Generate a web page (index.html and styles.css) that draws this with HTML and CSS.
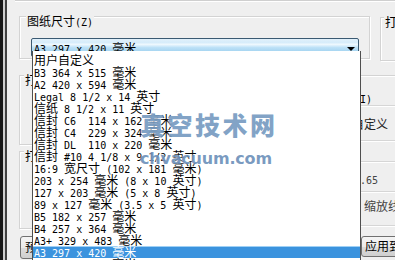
FILE: index.html
```html
<!DOCTYPE html>
<html>
<head>
<meta charset="utf-8">
<link rel="stylesheet" href="styles.css">
</head>
<body>
<div class="dlg">
  <div class="edge"></div>
  <div class="main">
    <div class="topline"></div>
    <div class="row1">
      <div class="grp paper">
        <div class="cap"><span class="c">图纸尺寸</span>(Z)</div>
        <div class="combo">
          <span class="val">A3 297 x 420 <span class="c">毫米</span></span>
          <i class="arrow"></i>
        </div>
      </div>
      <div class="grp copies">
        <div class="cap cap2"><span class="c">打印份数</span>(B)</div>
      </div>
    </div>
    <div class="row2">
      <div class="lcol">
        <div class="grp area"><div class="cap cap3"><span class="c">打印区域</span></div></div>
        <div class="grp offset"><div class="cap cap3"><span class="c">打印偏移</span></div></div>
        <div class="btn"><span class="c">预览</span>(P)...</div>
      </div>
      <div class="rcol">
        <div class="grp scale">
          <div class="line chk"><span class="c">布满图纸</span>(I)</div>
          <div class="sep s1"></div>
          <div class="line sc"><span class="c">自定义</span></div>
          <div class="sep s2"></div>
          <div class="sep s3"></div>
          <div class="line num">1.65</div>
          <div class="sep s4"></div>
          <div class="line lw"><span class="c">缩放线宽</span>(L)</div>
          <div class="sep s5"></div>
          <div class="btn btn2"><span class="c">应用到布局</span>(U)</div>
        </div>
      </div>
    </div>
  </div>

  <div class="list">
    <div class="r"><span class="c">用户自定义</span></div>
    <div class="r">B3 364 x 515 <span class="c">毫米</span></div>
    <div class="r">A2 420 x 594 <span class="c">毫米</span></div>
    <div class="r">Legal 8 1/2 x 14 <span class="c">英寸</span></div>
    <div class="r"><span class="c">信纸</span> 8 1/2 x 11 <span class="c">英寸</span></div>
    <div class="r"><span class="c">信封</span> C6  114 x 162 <span class="c">毫米</span></div>
    <div class="r"><span class="c">信封</span> C4  229 x 324 <span class="c">毫米</span></div>
    <div class="r"><span class="c">信封</span> DL  110 x 220 <span class="c">毫米</span></div>
    <div class="r"><span class="c">信封</span> #10 4 1/8 x 9 1/2 <span class="c">英寸</span></div>
    <div class="r">16:9 <span class="c">宽尺寸</span> (102 x 181 <span class="c">毫米</span>)</div>
    <div class="r">203 x 254 <span class="c">毫米</span> (8 x 10 <span class="c">英寸</span>)</div>
    <div class="r">127 x 203 <span class="c">毫米</span> (5 x 8 <span class="c">英寸</span>)</div>
    <div class="r">89 x 127 <span class="c">毫米</span> (3.5 x 5 <span class="c">英寸</span>)</div>
    <div class="r">B5 182 x 257 <span class="c">毫米</span></div>
    <div class="r">B4 257 x 364 <span class="c">毫米</span></div>
    <div class="r">A3+ 329 x 483 <span class="c">毫米</span></div>
    <div class="r sel">A3 297 x 420 <span class="c">毫米</span></div>
    <div class="r">A5 148 x 210 <span class="c">毫米</span></div>
  </div>

  <div class="wm">
    <div class="wm-cn">真空技术网</div>
    <div class="wm-en">chvacuum.com</div>
  </div>
</div>
</body>
</html>
```

FILE: styles.css
```css
* { box-sizing: border-box; margin: 0; padding: 0; }
html, body { width: 395px; height: 260px; overflow: hidden; }
body {
  background: #efefef;
  color: #000;
  font-family: "DejaVu Sans Mono", "Noto Sans CJK SC", monospace;
  font-size: 10px;
  line-height: 12px;
}
.c { font-family: "Noto Sans CJK SC", sans-serif; font-size: 12px; }

.dlg { position: relative; width: 395px; height: 260px; display: flex; overflow: hidden; }
.edge {
  width: 7px; flex: none;
  background: linear-gradient(to right, #161616 0 3px, #cdcdcd 3px 5px, #404040 5px 7px);
}
.main { flex: 1; display: flex; flex-direction: column; min-width: 0; }
.topline {
  height: 3px; margin-left: 8px;
  border-left: 1px solid #cfcfcf; border-bottom: 1px solid #cfcfcf;
  box-shadow: 0 1px 0 #fff;
}

.grp { border: 1px solid #d3d3d3; box-shadow: inset 1px 1px 0 #fff, 1px 1px 0 #fff; }
.cap {
  display: inline-block; height: 12px; padding: 0 1px;
  margin: -8px 0 0 6px; background: #efefef; white-space: nowrap;
}
.cap2 { margin-left: 3px; }
.cap3 { margin-left: 4px; }

.row1 { display: flex; height: 60px; flex: none; }
.paper { margin: 15px 0 0 12px; width: 351px; height: 43px; flex: none; }
.copies { margin: 16px 0 0 10px; flex: 1; height: 44px; border-right: none; }

.combo {
  margin: 9px 0 0 11px; width: 328px; height: 19px;
  border: 1px solid #3b5a72; border-radius: 2px;
  background: linear-gradient(#e2f1fb 0%, #d6ecfa 20%, #eef8fe 32%, #bde1f7 50%, #a3d3f0 75%, #7db9df 100%);
  display: flex; align-items: center; justify-content: space-between;
  padding: 0 2px 0 2px; white-space: pre;
}
.val { height: 12px; }
.arrow {
  width: 0; height: 0; margin: 3px 1px 0 0;
  border-left: 4px solid transparent; border-right: 4px solid transparent;
  border-top: 4px solid #000;
}

.row2 { display: flex; flex: 1; }
.lcol { width: 283px; flex: none; display: flex; flex-direction: column; }
.area { margin: 14px 0 0 12px; width: 260px; height: 70px; }
.offset { margin: 6px 0 0 12px; width: 260px; height: 78px; }
.btn {
  margin: 7px 0 0 13px; width: 75px; height: 23px;
  border: 1px solid #707070; border-radius: 3px;
  background: linear-gradient(#f4f4f4, #ebebeb 50%, #dcdcdc 51%, #cfcfcf);
  padding: 4px 0 0 4px; white-space: nowrap;
}
.rcol { flex: 1; min-width: 0; }
.scale {
  margin: 14px 0 0 4px; height: 200px; border-right: none;
  display: flex; flex-direction: column;
}
.line { height: 12px; white-space: pre; flex: none; }
.chk { margin-top: 16px; padding-left: 11px; }
.sep { height: 1px; background: #d6d6d6; box-shadow: 0 1px 0 #fff; flex: none; }
.s1 { margin-top: 1px; }
.sc { margin-top: 12px; padding-left: 57px; color: #222; }
.s2 { margin-top: 10px; }
.s3 { margin-top: 20px; }
.num { margin-top: 13px; padding-left: 59px; color: #444; }
.s4 { margin-top: 4px; }
.lw { margin-top: 8px; padding-left: 69px; color: #444; }
.s5 { margin-top: 13px; }
.btn2 { margin: 10px 0 0 66px; width: 90px; height: 21px; padding: 3px 0 0 3px; flex: none; }

.list {
  position: absolute; left: 32px; top: 51px; width: 329px; height: 220px;
  background: #fff;
  border-left: 1px solid #4f4f4f; border-right: 1px solid #4f4f4f;
  padding-top: 3px;
}
.r { height: 12px; padding-left: 1px; white-space: pre; }
.sel { background: #3b93de; color: #fff; box-shadow: inset 0 1px 0 #9fd0f5; }

.wm { position: absolute; left: 140px; top: 112px; pointer-events: none; }
.wm-cn {
  font-family: "Noto Sans CJK SC", sans-serif; font-weight: 900;
  font-size: 25px; line-height: 25px; letter-spacing: 2.5px;
  color: rgba(82, 128, 176, 0.72);
  text-shadow: 0 0 2px rgba(255,255,255,0.9);
}
.wm-en {
  margin: 14px 0 0 0;
  font-family: "DejaVu Sans", sans-serif; font-weight: bold;
  font-size: 16px; line-height: 16px; letter-spacing: -0.2px;
  color: rgba(70, 115, 168, 0.72);
  text-shadow: 0 0 2px rgba(255,255,255,0.9);
}
```
